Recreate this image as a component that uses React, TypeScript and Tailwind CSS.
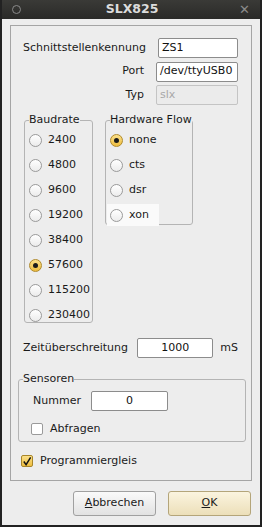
import React from "react";

const font = { fontFamily: '"DejaVu Sans", "Liberation Sans", sans-serif' };

const Radio = ({ label, checked, hl }: { label: string; checked?: boolean; hl?: boolean }) => (
  <div className={`flex items-center h-[22px] pl-[3px] gap-[6px] ${hl ? "bg-[#fafafa] w-[52px]" : ""}`}>
    <span
      className={`w-[13px] h-[13px] rounded-full border flex items-center justify-center ${
        checked
          ? "border-[#b08a2c] bg-[linear-gradient(#fbe08a,#eebd3f)]"
          : "border-[#9a9a9a] bg-[linear-gradient(#ffffff,#ececec)]"
      }`}
    >
      {checked && <span className="w-[5px] h-[5px] rounded-full bg-[#1a1a1a]" />}
    </span>
    <span className="text-[11px] text-[#1a1a1a]">{label}</span>
  </div>
);

const Check = ({ checked }: { checked?: boolean }) => (
  <span
    className={`w-[12px] h-[12px] rounded-[2px] border flex items-center justify-center ${
      checked
        ? "border-[#a8862a] bg-[linear-gradient(#fbe08a,#eebd3f)]"
        : "border-[#9a9a9a] bg-white"
    }`}
  >
    {checked && (
      <svg width="11" height="11" viewBox="0 0 11 11">
        <path d="M2 5.5 L4.5 9 L9.5 1" stroke="#111" strokeWidth="1.6" fill="none" />
      </svg>
    )}
  </span>
);

const Input = ({ value, w, center, disabled }: { value: string; w: string; center?: boolean; disabled?: boolean }) => (
  <div
    className={`${w} h-[20px] rounded-[2px] border flex items-center px-[3px] text-[11px] ${
      center ? "justify-center" : ""
    } ${disabled ? "border-[#c4c4c4] bg-[#ebebeb] text-[#a8a8a8]" : "border-[#8c8c8c] bg-white text-[#111]"}`}
  >
    {value}
  </div>
);

export default function App() {
  const bauds = ["2400", "4800", "9600", "19200", "38400", "57600", "115200", "230400"];
  return (
    <div className="w-[262px] h-[527px] bg-[#222] flex flex-col px-[2px] pb-[2px]" style={font}>
      {/* title bar */}
      <div className="h-[19px] flex items-center justify-between px-[10px] bg-[linear-gradient(#3a3a37,#2a2a28)]">
        <span className="w-[9px] h-[9px] rounded-full border-[1.5px] border-[#8a8a8a]" />
        <span className="text-[12.5px] font-bold text-[#dcdcdc] pl-[4px]">SLX825</span>
        <span className="text-[13px] text-[#8a8a8a] leading-none">✕</span>
      </div>

      <div className="flex-1 bg-[#ededed] flex flex-col pt-[6px] px-[8px] text-[#1a1a1a]">
        <div className="h-[456px] border border-[#a5a5a5] flex flex-col pl-[12px] pr-[13px] pt-[12px]">
          {/* top rows */}
          <div className="flex flex-col gap-[3.5px]">
            {[
              ["Schnittstellenkennung", "ZS1", false],
              ["Port", "/dev/ttyUSB0", false],
              ["Typ", "slx", true],
            ].map(([l, v, d]) => (
              <div key={l as string} className="flex items-center justify-end gap-[12px]">
                <span className="text-[11px]">{l as string}</span>
                <Input value={v as string} w="w-[82px]" disabled={d as boolean} />
              </div>
            ))}
          </div>

          {/* groups */}
          <div className="flex items-start gap-[12px] mt-[8px] ml-[1px]">
            <fieldset className="w-[69px] h-[210px] border border-[#b4b4b4] rounded-[3px] pt-[2px] pl-[1px]">
              <legend className="text-[11px] ml-[3px] px-0 leading-[14px] whitespace-nowrap">Baudrate</legend>
              <div className="flex flex-col gap-[3px]">
                {bauds.map((b) => (
                  <Radio key={b} label={b} checked={b === "57600"} />
                ))}
              </div>
            </fieldset>
            <fieldset className="w-[88px] h-[112px] border border-[#b4b4b4] rounded-[3px] pt-[2px] pl-[1px]">
              <legend className="text-[11px] ml-[3px] px-0 leading-[14px] whitespace-nowrap">Hardware Flow</legend>
              <div className="flex flex-col gap-[3px]">
                <Radio label="none" checked />
                <Radio label="cts" />
                <Radio label="dsr" />
                <Radio label="xon" hl />
              </div>
            </fieldset>
          </div>

          {/* timeout */}
          <div className="flex items-center mt-[15px]">
            <span className="text-[11px] w-[116px]">Zeitüberschreitung</span>
            <Input value="1000" w="w-[77px]" center />
            <span className="text-[11px] ml-[7px]">mS</span>
          </div>

          {/* sensors */}
          <fieldset className="mt-[14px] -ml-[5px] w-[228px] h-[70px] border border-[#b4b4b4] rounded-[3px]">
            <legend className="text-[11px] ml-[4px] leading-[14px]">Sensoren</legend>
            <div className="flex items-center pl-[14px] mt-[5px]">
              <span className="text-[11px] w-[58px]">Nummer</span>
              <Input value="0" w="w-[77px]" center />
            </div>
            <div className="flex items-center gap-[7px] pl-[12px] mt-[10px]">
              <Check />
              <span className="text-[11px]">Abfragen</span>
            </div>
          </fieldset>

          <div className="flex items-center gap-[7px] mt-[11px] -ml-[2px]">
            <Check checked />
            <span className="text-[11px]">Programmiergleis</span>
          </div>
        </div>

        {/* buttons */}
        <div className="flex justify-end gap-[12px] mt-[10px] pr-[1px]">
          <button className="w-[83px] h-[25px] rounded-[3px] border border-[#a0a0a0] bg-[linear-gradient(#fafafa,#e2e2e2)] text-[11px]">
            <span className="underline">A</span>bbrechen
          </button>
          <button className="w-[83px] h-[25px] rounded-[3px] border border-[#b4a57a] bg-[linear-gradient(#fbf4df,#ecdfb9)] text-[11px]">
            <span className="underline">O</span>K
          </button>
        </div>
      </div>
    </div>
  );
}
